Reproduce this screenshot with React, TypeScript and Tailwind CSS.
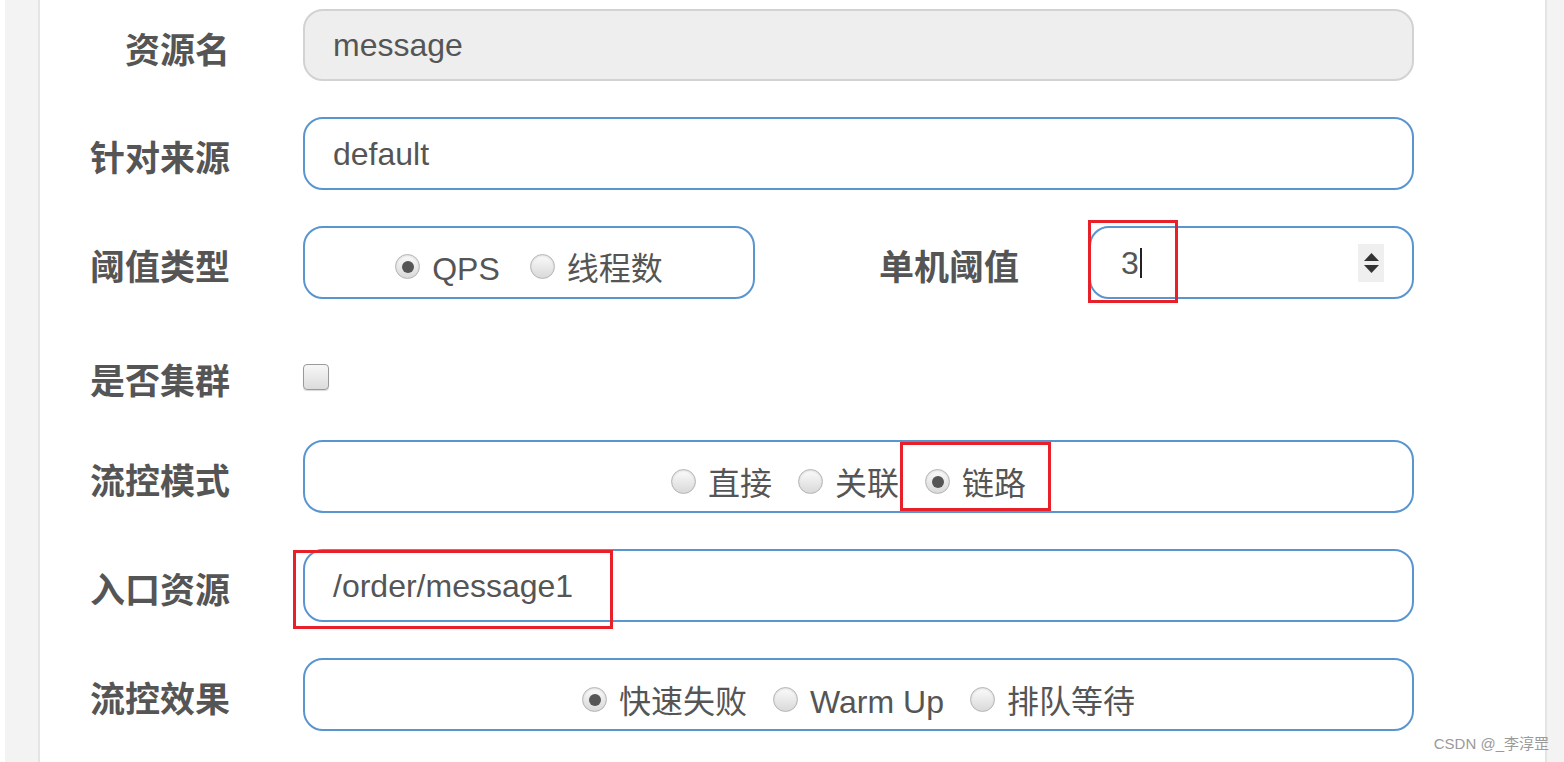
import { useState } from "react";

const cjk = "font-['Liberation_Sans','Noto_Sans_CJK_SC',sans-serif]";

const inputBox =
  "h-[73px] rounded-[20px] border-2 border-[#5b95d0] bg-white flex items-center";

type RadioProps = { label: string; checked?: boolean };

const Radio = ({ label, checked }: RadioProps) => (
  <span className="flex items-center gap-[12px]">
    <span className="w-[25px] h-[25px] rounded-full border border-[#b5b5b5] bg-gradient-to-b from-[#fbfbfb] to-[#d9d9d9] flex items-center justify-center shadow-[inset_0_1px_2px_rgba(0,0,0,0.12)]">
      {checked && <span className="w-[12px] h-[12px] rounded-full bg-[#555]" />}
    </span>
    <span className="text-[32px] leading-none text-[#555] pt-[4px]">{label}</span>
  </span>
);

const Label = ({ children }: { children: string }) => (
  <div className="w-[190px] shrink-0 text-right text-[35px] font-bold text-[#555] pt-[10px] leading-none">
    {children}
  </div>
);

const RedMark = ({ className }: { className: string }) => (
  <span className={`absolute border-[3px] border-[#e8202a] pointer-events-none ${className}`} />
);

export default function App() {
  const [threshold] = useState("3");

  return (
    <div className={`relative w-full h-[762px] bg-white flex ${cjk}`}>
      {/* side gutters */}
      <div className="w-[5px] bg-white" />
      <div className="w-[35px] bg-[#f3f3f3] border-r-2 border-[#e4e4e4]" />

      <div className="flex-1 pt-[9px] pr-[131px]">
        <div className="flex flex-col gap-[36px]">
          <div className="flex items-center gap-[73px]">
            <Label>资源名</Label>
            <div className="flex-1 h-[72px] rounded-[20px] border-2 border-[#d2d2d2] bg-[#eeeeee] flex items-center pl-[28px] text-[32px] text-[#555]">
              message
            </div>
          </div>

          <div className="flex items-center gap-[73px]">
            <Label>针对来源</Label>
            <div className={`flex-1 ${inputBox} pl-[28px] text-[32px] text-[#555]`}>default</div>
          </div>

          <div className="flex items-center gap-[73px]">
            <Label>阈值类型</Label>
            <div className="flex-1 flex items-center">
              <div className={`w-[452px] ${inputBox} justify-center gap-[30px] pt-[8px]`}>
                <Radio label="QPS" checked />
                <Radio label="线程数" />
              </div>
              <div className="ml-auto text-[35px] font-bold text-[#555] pt-[10px] leading-none">单机阈值</div>
              <div className={`relative ml-[70px] w-[325px] ${inputBox} pl-[30px] pr-[28px]`}>
                <span className="text-[32px] text-[#555] leading-none">{threshold}</span>
                <span className="w-[2px] h-[30px] bg-[#222] ml-[1px]" />
                <span className="ml-auto w-[26px] h-[38px] bg-[#efefef] flex flex-col items-center justify-center gap-[4px]">
                  <svg width="15" height="8" viewBox="0 0 15 8">
                    <path d="M7.5 0L15 8H0z" fill="#333" />
                  </svg>
                  <svg width="15" height="8" viewBox="0 0 15 8">
                    <path d="M0 0h15L7.5 8z" fill="#333" />
                  </svg>
                </span>
                <RedMark className="-left-[3px] -top-[8px] w-[90px] h-[83px]" />
              </div>
            </div>
          </div>

          <div className="flex items-center gap-[73px] h-[69px] pt-[14px]">
            <Label>是否集群</Label>
            <span className="w-[26px] h-[26px] rounded-[4px] border border-[#9a9a9a] bg-gradient-to-b from-[#f7f7f7] to-[#dcdcdc] shadow-[0_1px_1px_rgba(0,0,0,0.15)]" />
          </div>

          <div className="flex items-center gap-[73px]">
            <Label>流控模式</Label>
            <div className={`flex-1 ${inputBox} justify-center gap-[26px] pr-[20px] pt-[10px]`}>
              <Radio label="直接" />
              <Radio label="关联" />
              <span className="relative">
                <Radio label="链路" checked />
                <RedMark className="-left-[25px] -right-[25px] -top-[22px] -bottom-[11px]" />
              </span>
            </div>
          </div>

          <div className="flex items-center gap-[73px]">
            <Label>入口资源</Label>
            <div className={`relative flex-1 ${inputBox} pl-[28px] text-[32px] text-[#555]`}>
              /order/message1
              <RedMark className="-left-[12px] -top-[1px] w-[320px] h-[79px]" />
            </div>
          </div>

          <div className="flex items-center gap-[73px]">
            <Label>流控效果</Label>
            <div className={`flex-1 ${inputBox} justify-center gap-[26px] pt-[10px]`}>
              <Radio label="快速失败" checked />
              <Radio label="Warm Up" />
              <Radio label="排队等待" />
            </div>
          </div>
        </div>
      </div>

      <div className="w-[19px] bg-[#f3f3f3] border-l-2 border-[#e4e4e4]" />

      <span className="absolute right-[15px] top-[736px] text-[15px] text-[#9a9a9a] leading-none">
        CSDN @_李淳罡
      </span>
    </div>
  );
}
